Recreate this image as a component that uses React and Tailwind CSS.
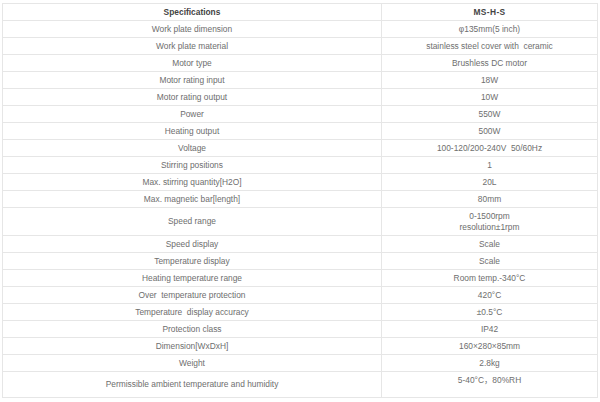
export default function App() {
  const rows = [
    ["Work plate dimension", "φ135mm(5 inch)"],
    ["Work plate material", "stainless steel cover with  ceramic"],
    ["Motor type", "Brushless DC motor"],
    ["Motor rating input", "18W"],
    ["Motor rating output", "10W"],
    ["Power", "550W"],
    ["Heating output", "500W"],
    ["Voltage", "100-120/200-240V  50/60Hz"],
    ["Stirring positions", "1"],
    ["Max. stirring quantity[H2O]", "20L"],
    ["Max. magnetic bar[length]", "80mm"],
    ["Speed range", "SPEED"],
    ["Speed display", "Scale"],
    ["Temperature display", "Scale"],
    ["Heating temperature range", "Room temp.-340°C"],
    ["Over  temperature protection", "420°C"],
    ["Temperature  display accuracy", "±0.5°C"],
    ["Protection class", "IP42"],
    ["Dimension[WxDxH]", "160×280×85mm"],
    ["Weight", "2.8kg"],
  ];
  return (
    <div className="w-[600px] h-[402px] bg-white overflow-hidden pt-[3px] pl-[2px]" style={{ fontFamily: '"Liberation Sans", Arial, "Noto Sans CJK SC", sans-serif' }}>
      <div className="w-[596px] border border-[#e6e6e6] text-[8.4px] leading-[11px] text-[#6e6e6e]">
        <div className="grid grid-cols-[379px_1fr] border-b border-[#e6e6e6] font-bold text-[#444]">
          <div className="h-[16px] flex items-center justify-center border-r border-[#e6e6e6]">Specifications</div>
          <div className="h-[16px] flex items-center justify-center tracking-[0.4px]">MS-H-S</div>
        </div>
        {rows.map(([a, b], i) => (
          <div key={i} className="grid grid-cols-[379px_1fr] border-b border-[#e6e6e6]">
            <div className={`${b === "SPEED" ? "h-[27px]" : "h-[16px]"} flex items-center justify-center border-r border-[#e6e6e6] whitespace-pre`}>{a}</div>
            {b === "SPEED" ? (
              <div className="h-[27px] flex flex-col items-center justify-center">
                <div>0-1500rpm</div>
                <div>resolution±1rpm</div>
              </div>
            ) : (
              <div className="h-[16px] flex items-center justify-center whitespace-pre">{b}</div>
            )}
          </div>
        ))}
        <div className="grid grid-cols-[379px_1fr]">
          <div className="h-[25px] flex items-center justify-center border-r border-[#e6e6e6]">Permissible ambient temperature and humidity</div>
          <div className="h-[25px] flex justify-center pt-[3px]">5-40°C，80%RH</div>
        </div>
      </div>
    </div>
  );
}
